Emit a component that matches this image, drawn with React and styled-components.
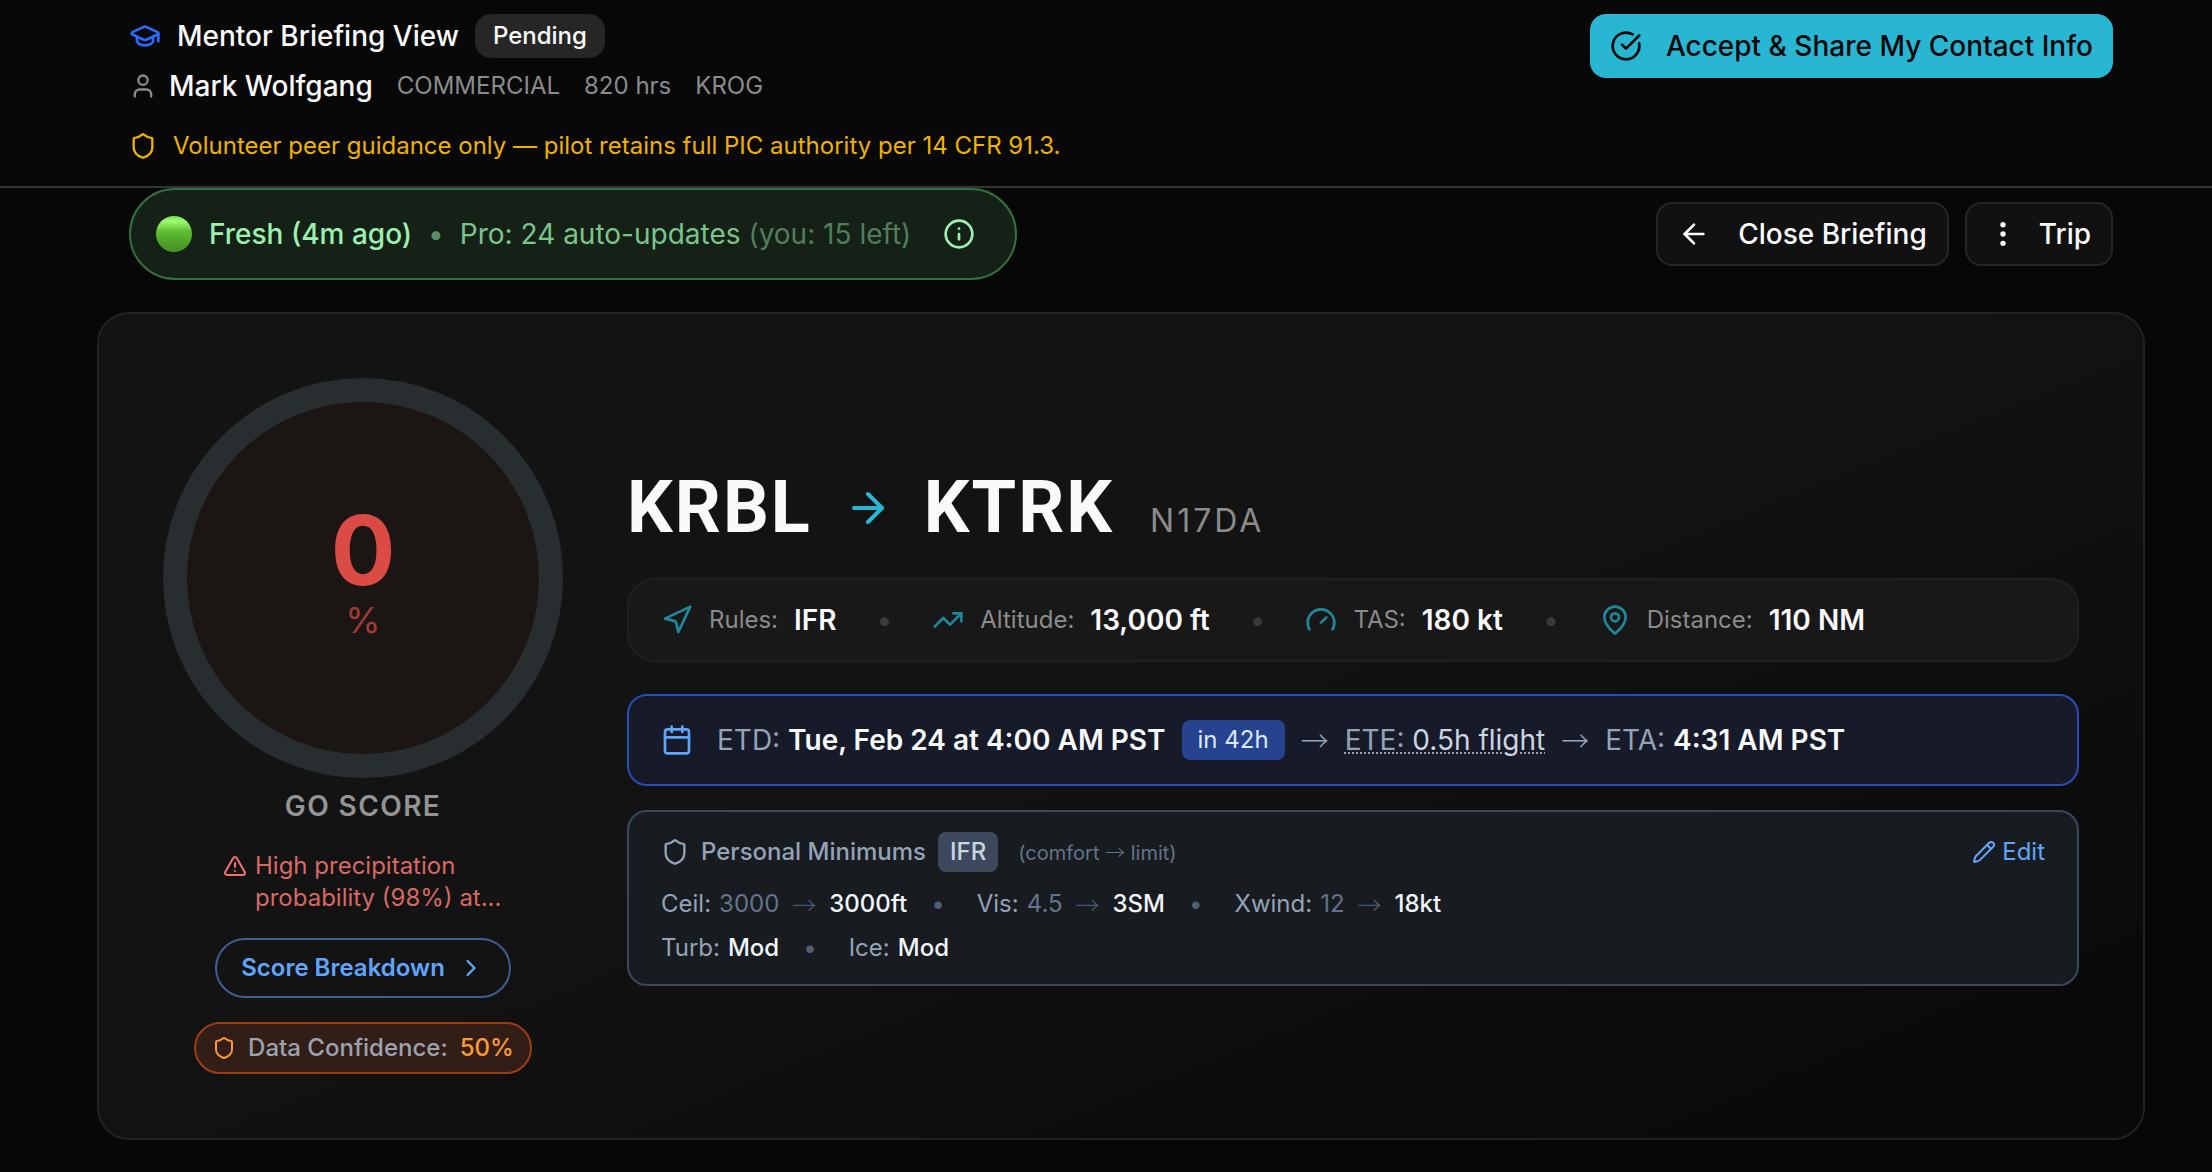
import React from "react";
import styled, { createGlobalStyle } from "styled-components";
import {
	ArrowLeft,
	ArrowRight,
	Calendar,
	ChevronRight,
	CircleCheckBig,
	EllipsisVertical,
	Gauge,
	GraduationCap,
	Info,
	MapPin,
	Navigation,
	Pencil,
	Shield,
	TrendingUp,
	TriangleAlert,
	User
} from "lucide-react";

const GlobalStyle = createGlobalStyle`
	* {
		box-sizing: border-box;
	}
	body {
		margin: 0;
		background: #070707;
		color: #fafafa;
		font-family: Inter, sans-serif;
		font-size: 24px;
		line-height: 32px;
		-webkit-font-smoothing: antialiased;
	}
	button {
		font: inherit;
		cursor: pointer;
	}
	svg {
		flex-shrink: 0;
	}
`;

const Row = styled.div`
	display: flex;
	align-items: center;
	gap: ${props => props.$gap || 16}px;
`;

const Header = styled.header`
	display: flex;
	justify-content: space-between;
	align-items: flex-start;
	padding: 14px 99px 24px 129px;
	background: #080808;
	border-bottom: 2px solid #333333;
`;
Header.Lines = styled.div`
	display: flex;
	flex-direction: column;
`;
Header.Title = styled.h1`
	margin: 0;
	font-size: 28px;
	font-weight: 500;
	line-height: 44px;
	display: flex;
	align-items: center;
	gap: 16px;

	svg {
		color: #2b6bff;
	}
`;
Header.Person = styled.div`
	display: flex;
	align-items: center;
	gap: 24px;
	margin-top: 8px;
	line-height: 40px;
	color: #8b8b8b;
`;
Header.Name = styled.strong`
	display: flex;
	align-items: center;
	gap: 12px;
	font-size: 28px;
	font-weight: 500;
	color: #fafafa;

	svg {
		color: #8b8b8b;
	}
`;
Header.Notice = styled.p`
	display: flex;
	align-items: center;
	gap: 16px;
	margin: 24px 0 0;
	color: #f0b100;
`;

const Status = styled.span`
	padding: 6px 18px;
	border-radius: 16px;
	background: #262626;
	font-size: 24px;
	line-height: 32px;
`;

const Button = styled.button`
	display: flex;
	align-items: center;
	gap: ${props => props.$gap || 24}px;
	height: 64px;
	padding: 0 20px;
	border: ${props => (props.$primary ? "0" : "2px solid #262626")};
	border-radius: 16px;
	background: ${props => (props.$primary ? "#29b6d3" : "#111111")};
	color: ${props => (props.$primary ? "#080808" : "#fafafa")};
	font-size: 28px;
	font-weight: 500;
`;

const Main = styled.main`
	padding: 0 67px 32px 97px;
`;

const Toolbar = styled.div`
	display: flex;
	justify-content: space-between;
	align-items: center;
	padding: 0 32px;
	margin-bottom: 32px;
`;

const Freshness = styled.div`
	display: flex;
	align-items: center;
	gap: 16px;
	height: 92px;
	padding: 0 40px 0 24px;
	border: 2px solid #34703e;
	border-radius: 46px;
	background: #152117;
	color: #9cf0b0;
	font-size: 28px;
`;
Freshness.Light = styled.span`
	width: 36px;
	height: 36px;
	margin: 0 1px;
	border-radius: 50%;
	background: linear-gradient(#6fdc4a, #9dff6e 14%, #60bf35 42%, #4f9f28 75%, #48902a);
`;
Freshness.Age = styled.span`
	font-weight: 500;
`;
Freshness.Plan = styled.span`
	color: #7cc48c;
`;
Freshness.Left = styled.span`
	color: #527d5c;
`;
Freshness.Help = styled.button`
	display: flex;
	margin-left: 16px;
	padding: 0;
	border: 0;
	background: none;
	color: #9cf0b0;
`;

const Dot = styled.span`
	margin-right: ${props => props.$after || 0}px;
	color: ${props => props.$color};
`;

const Card = styled.section`
	display: flex;
	align-items: center;
	gap: 64px;
	padding: 64px;
	border: 2px solid #222222;
	border-radius: 32px;
	background: linear-gradient(to bottom right, #131313 45%, #0a0a0a 90%);
`;

const Score = styled.div`
	display: flex;
	flex-direction: column;
	align-items: center;
	width: 400px;
	flex-shrink: 0;
`;
Score.Ring = styled.div`
	display: flex;
	flex-direction: column;
	align-items: center;
	justify-content: center;
	width: 400px;
	height: 400px;
	border: 24px solid #282d2f;
	border-radius: 50%;
	background: #1b1513;
	color: #db4b45;
`;
Score.Value = styled.span`
	font-size: 96px;
	font-weight: 700;
	line-height: 84px;
`;
Score.Unit = styled.span`
	font-size: 36px;
	line-height: 56px;
	color: #a13b37;
`;
Score.Label = styled.div`
	margin-top: 8px;
	font-size: 28px;
	font-weight: 600;
	line-height: 40px;
	letter-spacing: 0.05em;
	color: #949494;
`;
Score.Reason = styled.div`
	display: flex;
	align-items: flex-start;
	gap: 8px;
	width: 280px;
	margin: 24px 0;
	color: #d86965;

	svg {
		margin-top: 4px;
		color: #f87171;
	}
`;

const Breakdown = styled.button`
	display: flex;
	align-items: center;
	gap: 12px;
	height: 60px;
	padding: 0 24px;
	border: 2px solid #3d5f92;
	border-radius: 30px;
	background: transparent;
	color: #60a5fa;
	font-weight: 600;
`;

const Confidence = styled.div`
	display: flex;
	align-items: center;
	gap: 12px;
	height: 52px;
	margin-top: 24px;
	padding: 0 16px;
	border: 2px solid #9a3f14;
	border-radius: 26px;
	background: #321e17;
	color: #9ca3af;
	font-weight: 500;

	svg,
	strong {
		color: #fb9a37;
		font-weight: 500;
	}
`;

const Details = styled.div`
	flex: 1;
	min-width: 0;
`;

const Route = styled.h2`
	display: flex;
	align-items: baseline;
	gap: 32px;
	margin: 0 0 28px;
	font-family: Roboto, sans-serif;
	font-size: 72px;
	font-weight: 700;
	line-height: 84px;
	letter-spacing: 2px;

	svg {
		align-self: center;
		color: #29b6d3;
	}
`;
Route.Tail = styled.span`
	margin-left: 4px;
	font-family: Inter, sans-serif;
	font-size: 32px;
	font-weight: 400;
	line-height: 40px;
	letter-spacing: 3px;
	color: #8b8b8b;
`;

const Facts = styled.div`
	display: flex;
	align-items: center;
	flex-wrap: wrap;
	gap: 0 40px;
	min-height: 84px;
	padding: 0 32px;
	border: 2px solid #202020;
	border-radius: 28px;
	background: #181818;
	font-size: 28px;
	line-height: 40px;
`;
Facts.Item = styled.div`
	display: flex;
	align-items: center;
	gap: 16px;
	color: #8b8b8b;

	span {
		font-size: 24px;
	}
	strong {
		font-weight: 600;
		color: #fafafa;
	}
	svg {
		color: #20879b;
	}
`;

const Timing = styled.div`
	display: flex;
	align-items: center;
	flex-wrap: wrap;
	gap: 0 16px;
	min-height: 92px;
	margin: 32px 0 24px;
	padding: 0 32px;
	border: 2px solid #264db8;
	border-radius: 20px;
	background: #171a28;
	color: #94a3b8;
	font-size: 28px;
	line-height: 40px;

	> svg {
		margin-right: 8px;
		color: #60a5fa;
	}
	strong {
		font-weight: 600;
		color: #f8fafc;
	}
`;
Timing.Flight = styled.span`
	text-decoration: underline dotted 2px;
	text-underline-offset: 2px;

	em {
		font-style: normal;
		color: #cbd5e1;
	}
`;

const Tag = styled.span`
	padding: 4px ${props => (props.$blue ? 16 : 12)}px;
	border-radius: 8px;
	background: ${props => (props.$blue ? "#27438f" : "#3d485c")};
	color: ${props => (props.$blue ? "#dbeafe" : "#cbd5e1")};
	font-size: 24px;
	font-weight: ${props => (props.$blue ? 400 : 500)};
	line-height: 32px;
`;

const Arrow = styled.span`
	font-family: "Noto Sans CJK SC", sans-serif;
	font-weight: 300;
`;

const Minimums = styled.div`
	display: flex;
	flex-direction: column;
	gap: 12px;
	padding: 20px 32px;
	border: 2px solid #3b475b;
	border-radius: 20px;
	background: #181b20;
	color: #94a3b8;
`;
Minimums.Head = styled.div`
	display: flex;
	align-items: center;
	gap: 12px;
	margin-bottom: 4px;
`;
Minimums.Title = styled.h3`
	margin: 0;
	font-size: 24px;
	font-weight: 500;
`;
Minimums.Hint = styled.span`
	margin-left: 8px;
	font-size: 20px;
	color: #64748b;
`;
Minimums.Edit = styled.button`
	display: flex;
	align-items: center;
	gap: 6px;
	margin-left: auto;
	padding: 0;
	border: 0;
	background: none;
	color: #60a5fa;
`;
Minimums.Item = styled.span`
	display: flex;
	gap: 8px;

	strong {
		font-weight: 500;
		color: #f1f5f9;
	}
`;
Minimums.Comfort = styled.span`
	color: #64748b;
`;
Minimums.Arrow = styled(Arrow)`
	margin: 0 5px;
	color: #4b5a70;
`;

const facts = [
	{ icon: Navigation, label: "Rules:", value: "IFR" },
	{ icon: TrendingUp, label: "Altitude:", value: "13,000 ft" },
	{ icon: Gauge, label: "TAS:", value: "180 kt" },
	{ icon: MapPin, label: "Distance:", value: "110 NM" }
];

const minimums = [
	[
		{ label: "Ceil:", comfort: "3000", limit: "3000ft" },
		{ label: "Vis:", comfort: "4.5", limit: "3SM" },
		{ label: "Xwind:", comfort: "12", limit: "18kt" }
	],
	[{ label: "Turb:", limit: "Mod" }, { label: "Ice:", limit: "Mod" }]
];

const Minimum = ({ label, comfort, limit }) => (
	<Minimums.Item>
		<span>{label}</span>
		{comfort && (
			<>
				<Minimums.Comfort>{comfort}</Minimums.Comfort>
				<Minimums.Arrow>→</Minimums.Arrow>
			</>
		)}
		<strong>{limit}</strong>
	</Minimums.Item>
);

const BriefingHeader = () => (
	<Header>
		<Header.Lines>
			<Header.Title>
				<GraduationCap size={32} />
				Mentor Briefing View
				<Status>Pending</Status>
			</Header.Title>
			<Header.Person>
				<Header.Name>
					<User size={28} />
					Mark Wolfgang
				</Header.Name>
				<span>COMMERCIAL</span>
				<span>820 hrs</span>
				<span>KROG</span>
			</Header.Person>
			<Header.Notice>
				<Shield size={28} />
				Volunteer peer guidance only — pilot retains full PIC authority per 14 CFR 91.3.
			</Header.Notice>
		</Header.Lines>
		<Button $primary>
			<CircleCheckBig size={32} />
			Accept &amp; Share My Contact Info
		</Button>
	</Header>
);

const GoScore = () => (
	<Score>
		<Score.Ring>
			<Score.Value>0</Score.Value>
			<Score.Unit>%</Score.Unit>
		</Score.Ring>
		<Score.Label>GO SCORE</Score.Label>
		<Score.Reason>
			<TriangleAlert size={24} />
			<span>High precipitation probability (98%) at...</span>
		</Score.Reason>
		<Breakdown>
			Score Breakdown
			<ChevronRight size={28} />
		</Breakdown>
		<Confidence>
			<Shield size={24} />
			<span>Data Confidence:</span>
			<strong>50%</strong>
		</Confidence>
	</Score>
);

const App = () => (
	<>
		<GlobalStyle />
		<BriefingHeader />
		<Main>
			<Toolbar>
				<Freshness>
					<Freshness.Light />
					<Freshness.Age>Fresh (4m ago)</Freshness.Age>
					<Dot $color="#5b8f68">•</Dot>
					<Freshness.Plan>
						Pro: 24 auto-updates <Freshness.Left>(you: 15 left)</Freshness.Left>
					</Freshness.Plan>
					<Freshness.Help aria-label="About updates">
						<Info size={32} />
					</Freshness.Help>
				</Freshness>
				<Row>
					<Button $gap={28}>
						<ArrowLeft size={32} />
						Close Briefing
					</Button>
					<Button $gap={20}>
						<EllipsisVertical size={32} />
						Trip
					</Button>
				</Row>
			</Toolbar>
			<Card>
				<GoScore />
				<Details>
					<Route>
						KRBL
						<ArrowRight size={48} />
						KTRK
						<Route.Tail>N17DA</Route.Tail>
					</Route>
					<Facts>
						{facts.map((fact, index) => (
							<React.Fragment key={fact.label}>
								{index > 0 && <Dot $color="#3a3a3a">•</Dot>}
								<Facts.Item>
									<fact.icon size={32} />
									<span>{fact.label}</span>
									<strong>{fact.value}</strong>
								</Facts.Item>
							</React.Fragment>
						))}
					</Facts>
					<Timing>
						<Calendar size={32} />
						<span>
							ETD: <strong>Tue, Feb 24 at 4:00 AM PST</strong>
						</span>
						<Tag $blue>in 42h</Tag>
						<Arrow>→</Arrow>
						<Timing.Flight>
							ETE: <em>0.5h flight</em>
						</Timing.Flight>
						<Arrow>→</Arrow>
						<span>
							ETA: <strong>4:31 AM PST</strong>
						</span>
					</Timing>
					<Minimums>
						<Minimums.Head>
							<Shield size={28} />
							<Minimums.Title>Personal Minimums</Minimums.Title>
							<Tag>IFR</Tag>
							<Minimums.Hint>
								(comfort <Arrow>→</Arrow> limit)
							</Minimums.Hint>
							<Minimums.Edit>
								<Pencil size={24} />
								Edit
							</Minimums.Edit>
						</Minimums.Head>
						{minimums.map((items, line) => (
							<Row key={line} $gap={24}>
								{items.map((item, index) => (
									<React.Fragment key={item.label}>
										{index > 0 && (
											<Dot $color="#4f5f77" $after={8}>
												•
											</Dot>
										)}
										<Minimum {...item} />
									</React.Fragment>
								))}
							</Row>
						))}
					</Minimums>
				</Details>
			</Card>
		</Main>
	</>
);

export default App;
